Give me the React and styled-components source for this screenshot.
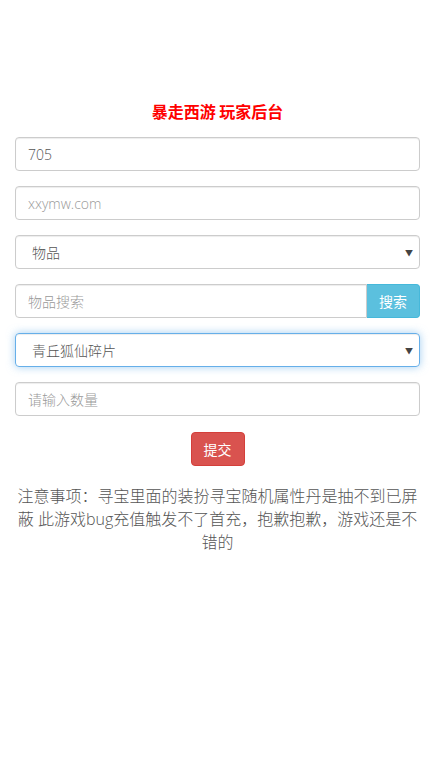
import React from 'react';
import styled, { createGlobalStyle } from 'styled-components';

const Global = createGlobalStyle`
  body {
    margin: 0;
    background: #fff;
    font-family: "Open Sans", "Noto Sans CJK SC", sans-serif;
    font-weight: 300;
    color: #555;
  }
`;

const Page = styled.div`
  padding: 98px 15px 0;
  display: flex;
  flex-direction: column;
  gap: 15px;
`;

const Title = styled.h3`
  margin: 0 0 -2px;
  text-align: center;
  color: #f00;
  font-size: 16px;
  font-weight: 700;
  line-height: 26px;
  font-family: "Noto Sans CJK SC", sans-serif;
`;

const Field = styled.input`
  box-sizing: border-box;
  width: 100%;
  height: 34px;
  padding: 6px 12px;
  font: inherit;
  font-size: 14px;
  color: #555;
  border: 1px solid ${p => (p.$focus ? '#66afe9' : '#ccc')};
  border-radius: ${p => (p.$joined ? '4px 0 0 4px' : '4px')};
  box-shadow: inset 0 1px 1px rgba(0,0,0,.075);
  outline: none;
  &::placeholder { color: #999; }
`;

const SelectBox = styled.div`
  box-sizing: border-box;
  height: 34px;
  padding: 0 6px 0 16px;
  display: flex;
  align-items: center;
  justify-content: space-between;
  font-size: 14px;
  color: #555;
  border: 1px solid ${p => (p.$focus ? '#66afe9' : '#ccc')};
  border-radius: 4px;
  box-shadow: inset 0 1px 1px rgba(0,0,0,.075)${p => (p.$focus ? ', 0 0 8px rgba(102,175,233,.6)' : '')};
`;

const Caret = styled.span`
  font-size: 8px;
  color: #444;
`;

const Group = styled.div`
  display: flex;
`;

const AddonButton = styled.button`
  flex: 0 0 53px;
  height: 34px;
  border: 1px solid #46b8da;
  border-left: none;
  background: #5bc0de;
  color: #fff;
  font: inherit;
  font-weight: 400;
  font-size: 14px;
  border-radius: 0 4px 4px 0;
`;

const Submit = styled.button`
  align-self: center;
  width: 54px;
  height: 34px;
  margin-top: 1px;
  background: #d9534f;
  border: 1px solid #d43f3a;
  border-radius: 4px;
  color: #fff;
  font: inherit;
  font-weight: 400;
  font-size: 14px;
`;

const Notice = styled.p`
  margin: 4px 0 0;
  text-align: center;
  font-size: 16px;
  line-height: 23px;
  color: #555;
`;

export default function App() {
  return (
    <>
      <Global />
      <Page>
        <Title>暴走西游 玩家后台</Title>
        <Field defaultValue="705" />
        <Field placeholder="xxymw.com" />
        <SelectBox>物品<Caret>▼</Caret></SelectBox>
        <Group>
          <Field $joined placeholder="物品搜索" />
          <AddonButton>搜索</AddonButton>
        </Group>
        <SelectBox $focus>青丘狐仙碎片<Caret>▼</Caret></SelectBox>
        <Field placeholder="请输入数量" />
        <Submit>提交</Submit>
        <Notice>注意事项：寻宝里面的装扮寻宝随机属性丹是抽不到已屏蔽 此游戏bug充值触发不了首充，抱歉抱歉，游戏还是不错的</Notice>
      </Page>
    </>
  );
}
